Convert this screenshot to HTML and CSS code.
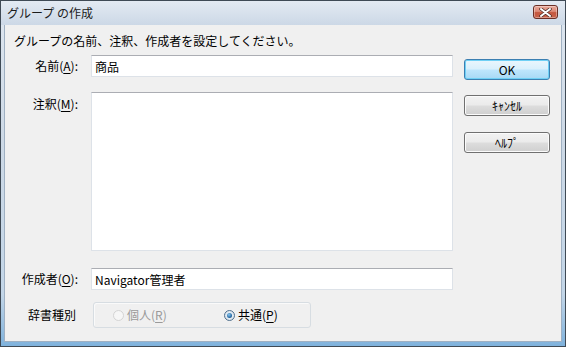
FILE: index.html
```html
<!DOCTYPE html>
<html lang="ja">
<head>
    <meta charset="UTF-8">
    <title>グループ の作成</title>
    <link rel="stylesheet" href="styles.css">
</head>
<body>
    <div class="window">
        <div class="titlebar">
            <span class="title">グループ の作成</span>
            <button class="close" type="button">
                <svg width="13" height="9" viewBox="0 0 13 9">
                    <path d="M2 1 L11 8 M11 1 L2 8" stroke="#4a2a24" stroke-width="3.4" stroke-linecap="round"/>
                    <path d="M2 1 L11 8 M11 1 L2 8" stroke="#ffffff" stroke-width="2" stroke-linecap="round"/>
                </svg>
            </button>
        </div>
        <div class="client">
            <p class="intro">グループの名前、注釈、作成者を設定してください。</p>
            <div class="body">
                <div class="fields">
                    <div class="row">
                        <label class="lbl" for="name">名前(<u>A</u>):</label>
                        <input class="field" id="name" type="text" value="商品">
                    </div>
                    <div class="row notes">
                        <label class="lbl" for="note">注釈(<u>M</u>):</label>
                        <textarea class="field memo" id="note"></textarea>
                    </div>
                    <div class="row author">
                        <label class="lbl" for="author">作成者(<u>O</u>):</label>
                        <input class="field" id="author" type="text" value="Navigator管理者">
                    </div>
                    <div class="row kind">
                        <span class="lbl">辞書種別</span>
                        <div class="group">
                            <span class="radio disabled"><span class="dot"></span><span>個人(<u>R</u>)</span></span>
                            <span class="radio checked"><span class="dot"></span><span>共通(<u>P</u>)</span></span>
                        </div>
                    </div>
                </div>
                <div class="buttons">
                    <button class="btn default" type="button">OK</button>
                    <button class="btn cancel" type="button">ｷｬﾝｾﾙ</button>
                    <button class="btn help" type="button">ﾍﾙﾌﾟ</button>
                </div>
            </div>
        </div>
    </div>
</body>
</html>
```

FILE: styles.css
```css
body {
    margin: 0;
    font-family: "Noto Sans CJK JP", "Noto Sans", sans-serif;
    font-size: 12px;
    color: #000;
    background: #fff;
}
.window {
    width: 566px;
    height: 347px;
    box-sizing: border-box;
    border: 1px solid #3f4a55;
    display: flex;
    flex-direction: column;
    background: linear-gradient(#dfe7f0 0%, #cdd9e6 40%, #c3d6e8 85%, #7fb2dc 100%);
    overflow: hidden;
}
.titlebar {
    height: 24px;
    display: flex;
    justify-content: space-between;
    align-items: flex-start;
    padding: 0 7px 0 6px;
    background: linear-gradient(#e3eaf2, #ccd8e6);
}
.title {
    line-height: 24px;
    color: #1b1b1b;
}
.close {
    margin-top: 4px;
    width: 25px;
    height: 14px;
    padding: 0;
    border: 1px solid #6b2f26;
    border-radius: 3px;
    background: linear-gradient(#e9a89a 0%, #dc8a78 45%, #c5573f 55%, #c9624a 100%);
    box-shadow: inset 0 0 0 1px rgba(255,255,255,0.35);
    display: flex;
    align-items: center;
    justify-content: center;
}
.client {
    flex: 1;
    margin: 0 3px 4px 3px;
    border: 1px solid #9fb0c2;
    border-top: none;
    background: #f0f0f0;
    padding: 8px 0 0 8px;
}
.intro {
    margin: 0 0 6px 1px;
    line-height: 16px;
}
.body {
    display: flex;
}
.row {
    display: flex;
    align-items: center;
}
.lbl {
    width: 65px;
    margin-right: 13px;
    text-align: right;
    line-height: 16px;
    white-space: nowrap;
}
.lbl u, .radio u {
    text-decoration-thickness: 1px;
    text-underline-offset: 2px;
}
.field {
    width: 362px;
    height: 22px;
    box-sizing: border-box;
    margin: 0;
    padding: 0 3px;
    border: 1px solid #dde2e8;
    border-top-color: #abadb3;
    background: #fff;
    font-family: inherit;
    font-size: 12px;
    color: #000;
    outline: none;
}
.notes {
    margin-top: 15px;
    align-items: flex-start;
}
.notes .lbl {
    padding-top: 4px;
}
.memo {
    height: 159px;
    resize: none;
}
.author {
    margin-top: 17px;
}
.kind {
    margin-top: 12px;
}
.kind .lbl {
    padding-right: 3px;
    margin-right: 14px;
    width: 63px;
}
.group {
    width: 218px;
    height: 26px;
    box-sizing: border-box;
    border: 1px solid #d7dde2;
    border-radius: 3px;
    box-shadow: inset 1px 1px 0 #fafafa;
    display: flex;
    align-items: center;
    padding-left: 19px;
}
.radio {
    flex: none;
    display: flex;
    align-items: center;
    gap: 3px;
    line-height: 16px;
}
.radio.disabled {
    width: 111px;
    color: #9a9a9a;
}
.dot {
    width: 11px;
    height: 11px;
    border-radius: 50%;
    box-sizing: border-box;
    border: 1px solid #d4d4d4;
    background: #f6f6f6;
    position: relative;
}
.checked .dot {
    border-color: #4f6f8c;
    background: radial-gradient(circle, #eef4f9 0%, #d5e0ea 100%);
}
.checked .dot::after {
    content: "";
    position: absolute;
    left: 2px;
    top: 2px;
    width: 5px;
    height: 5px;
    border-radius: 50%;
    background: radial-gradient(circle at 40% 35%, #8cc8f0 0%, #2a6ea8 60%, #163f66 100%);
}
.buttons {
    display: flex;
    flex-direction: column;
    margin-left: 11px;
    padding-top: 4px;
}
.btn {
    width: 86px;
    height: 21px;
    padding: 0;
    border: 1px solid #707070;
    border-radius: 3px;
    background: linear-gradient(#f2f2f2 0%, #ebebeb 48%, #dddddd 52%, #cfcfcf 100%);
    box-shadow: inset 0 0 0 1px #fbfbfb;
    font-family: inherit;
    font-size: 12px;
    color: #000;
    line-height: 19px;
}
.btn.default {
    border-color: #3c7fb1;
    background: linear-gradient(#eaf6fd 0%, #d9f0fc 48%, #bee6fd 52%, #a7d9f5 100%);
    box-shadow: inset 0 0 0 1px #6fd0f5;
}
.cancel {
    margin-top: 15px;
}
.help {
    margin-top: 16px;
}
```
